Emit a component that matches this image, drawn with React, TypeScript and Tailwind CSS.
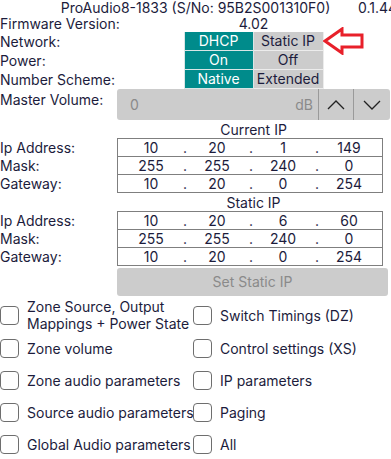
import React from "react";

const font = { fontFamily: "Inter, 'Noto Sans', sans-serif" };

const Toggle = ({ left, right, active }: { left: string; right: string; active: "left" | "right" }) => (
  <div className="mx-auto flex h-[19px] w-[140px]">
    <div
      className={
        "flex w-[70px] items-center justify-center border-r border-b border-l border-[#d9e6e6] " +
        (active === "left" ? "bg-[#008b8b] text-white" : "bg-[#cccccc]")
      }
    >
      {left}
    </div>
    <div className="flex w-[70px] items-center justify-center border-r border-b border-[#ececec] bg-[#cccccc]">
      {right}
    </div>
  </div>
);

const IpRow = ({ values }: { values: string[] }) => (
  <div className="grid h-[19px] w-[266px] grid-cols-4 border border-[#7f7f7f] -mt-px first:mt-0 leading-[17px]">
    {values.map((v, i) => (
      <div key={i} className="relative text-center">
        {v}
        {i < 3 && <span className="absolute -right-[3px] top-0">.</span>}
      </div>
    ))}
  </div>
);

const Check = ({ label }: { label: React.ReactNode }) => (
  <div className="flex items-center gap-[8px]">
    <span className="h-[19px] w-[19px] shrink-0 rounded-[4px] border-[1.5px] border-[#6e6e6e] bg-white" />
    <span className="leading-[17px] whitespace-nowrap">{label}</span>
  </div>
);

export default function App() {
  return (
    <div className="relative h-[459px] w-[391px] overflow-hidden bg-white text-[14px] text-[#1c1c3c]" style={font}>
      <div className="relative h-[16px] text-center leading-[16px] whitespace-nowrap">
        ProAudio8-1833 (S/No: 95B2S001310F0)
        <span className="absolute left-[358px] top-0">0.1.44</span>
      </div>

      <div className="grid grid-cols-[117px_273px] leading-[16px] whitespace-nowrap">
        <div className="h-[16px]">Firmware Version:</div>
        <div className="text-center">4.02</div>

        <div className="flex h-[19px] items-center">Network:</div>
        <div className="relative">
          <Toggle left="DHCP" right="Static IP" active="left" />
          <svg className="absolute left-[206px] -top-[5px]" width="42" height="28" viewBox="0 0 42 28">
            <path d="M2 14 L19 2 L19 8 L39 8 L39 20 L19 20 L19 26 Z" fill="none" stroke="#e8202a" strokeWidth="3" strokeLinejoin="miter" />
          </svg>
        </div>

        <div className="flex h-[19px] items-center">Power:</div>
        <Toggle left="On" right="Off" active="left" />

        <div className="flex h-[19px] items-center">Number Scheme:</div>
        <Toggle left="Native" right="Extended" active="left" />

        <div className="h-[31px] pt-[3px]">Master Volume:</div>
        <div className="flex h-[31px] rounded-[3px] bg-[#cccccc]">
          <div className="flex flex-1 items-center justify-between pl-[13px] pr-[5px] text-[#8a8a8a]">
            <span>0</span>
            <span>dB</span>
          </div>
          <div className="flex w-[35px] items-center justify-center border-l border-[#9a9a9a]">
            <svg width="18" height="10" viewBox="0 0 18 10">
              <polyline points="1,9 9,1 17,9" fill="none" stroke="#222" strokeWidth="1.3" />
            </svg>
          </div>
          <div className="flex w-[37px] items-center justify-center border-l border-[#9a9a9a]">
            <svg width="18" height="10" viewBox="0 0 18 10">
              <polyline points="1,1 9,9 17,1" fill="none" stroke="#222" strokeWidth="1.3" />
            </svg>
          </div>
        </div>

        <div className="h-[18px]" />
        <div className="flex h-[18px] items-end justify-center">Current IP</div>

        <div className="flex flex-col">
          <div className="flex h-[19px] items-center">Ip Address:</div>
          <div className="flex h-[18px] items-center">Mask:</div>
          <div className="flex h-[18px] items-center">Gateway:</div>
        </div>
        <div className="flex flex-col">
          <IpRow values={["10", "20", "1", "149"]} />
          <IpRow values={["255", "255", "240", "0"]} />
          <IpRow values={["10", "20", "0", "254"]} />
        </div>

        <div className="h-[18px]" />
        <div className="flex h-[18px] items-end justify-center">Static IP</div>

        <div className="flex flex-col">
          <div className="flex h-[19px] items-center">Ip Address:</div>
          <div className="flex h-[18px] items-center">Mask:</div>
          <div className="flex h-[18px] items-center">Gateway:</div>
        </div>
        <div className="flex flex-col">
          <IpRow values={["10", "20", "6", "60"]} />
          <IpRow values={["255", "255", "240", "0"]} />
          <IpRow values={["10", "20", "0", "254"]} />
        </div>

        <div />
        <div className="mt-[2px] flex h-[28px] w-[271px] items-center justify-center rounded-[3px] bg-[#cccccc] text-[#8a8a8a]">
          Set Static IP
        </div>
      </div>

      <div className="mt-[2px] grid grid-cols-[193px_198px] grid-rows-[34px_32px_32px_32px_32px]">
        <Check label={<>Zone Source, Output<br />Mappings + Power State</>} />
        <Check label="Switch Timings (DZ)" />
        <Check label="Zone volume" />
        <Check label="Control settings (XS)" />
        <Check label="Zone audio parameters" />
        <Check label="IP parameters" />
        <Check label="Source audio parameters" />
        <Check label="Paging" />
        <Check label="Global Audio parameters" />
        <Check label="All" />
      </div>
    </div>
  );
}
